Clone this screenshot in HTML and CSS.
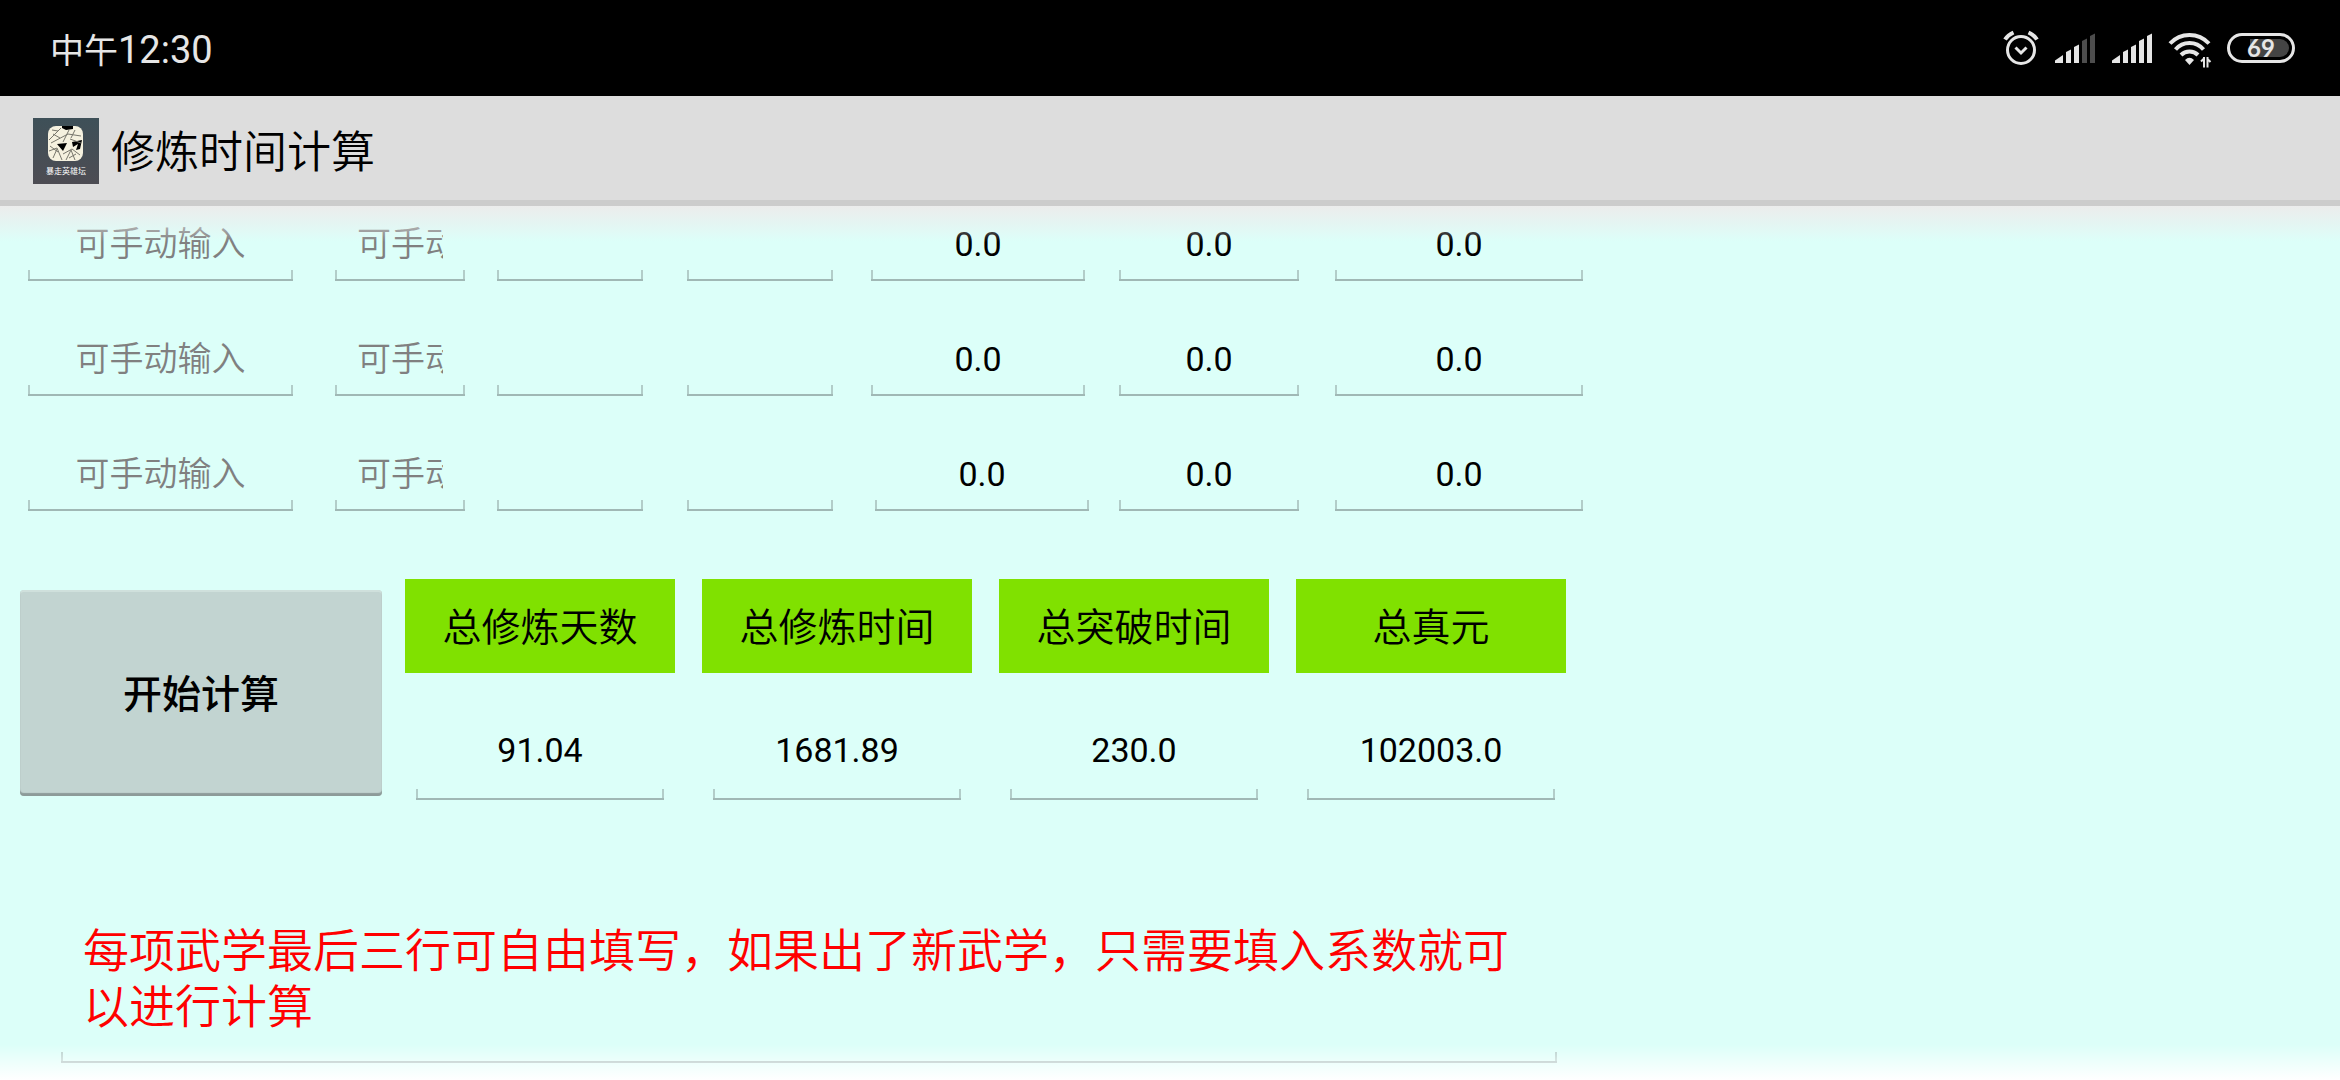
FILE: index.html
```html
<!DOCTYPE html>
<html lang="zh-CN">
<head>
<meta charset="utf-8">
<meta name="viewport" content="width=device-width, initial-scale=1">
<title>修炼时间计算</title>
<link rel="stylesheet" href="styles.css">
</head>
<body>
<div class="status-bar">
  <div class="clock">中午<span class="clock-digits">12:30</span></div>
  <div class="status-icons">
    <svg class="icon" width="36" height="36" viewBox="0 0 36 36" fill="none" stroke="#e6e6e6" stroke-width="3" aria-label="闹钟">
      <circle cx="18" cy="20" r="13.5"/>
      <path d="M12.5 17.5l5.5 5.500 5.500-5.500" stroke-width="3"/>
      <path d="M2 9.500Q5 5 10.500 2.500M34 9.500Q31 5 25.500 2.500" stroke-width="4"/>
    </svg>
    <svg class="icon" width="42" height="36" viewBox="0 0 42 36" fill="#e6e6e6" aria-label="信号一">
      <path d="M1 33v-2.500l8-5.500v8zM12 33V22l5-2.500V33zM20 33V17l5-2.500V33z"/>
      <path d="M28 33V11l5-2.500V33zM36 33V6l5-2.500V33z" fill="#4d4d4d"/>
    </svg>
    <svg class="icon" width="42" height="36" viewBox="0 0 42 36" fill="#e6e6e6" aria-label="信号二">
      <path d="M1 33v-2.500l8-5.500v8zM12 33V22l5-2.500V33zM20 33V17l5-2.500V33zM28 33V11l5-2.500V33zM36 33V6l5-2.500V33z"/>
    </svg>
    <svg class="icon" width="44" height="36" viewBox="0 0 44 36" fill="none" stroke="#e6e6e6" stroke-width="4" aria-label="无线网络">
      <path d="M2 13.500Q10 5 21.500 5t19.500 8.500"/>
      <path d="M7.500 19.500Q13 13 21.500 13t14 6.500"/>
      <path d="M13 25Q16.500 21.500 21.500 21.500t8.500 3.500"/>
      <path d="M17 30Q21.500 25.500 26 30L21.500 35z" fill="#e6e6e6" stroke="none"/>
      <path d="M36 27v10.500M33 31.500l3-3M39.500 37.500V27M42.500 32l-3-3" stroke-width="2"/>
    </svg>
    <div class="battery"><span class="battery-level">69</span></div>
  </div>
</div>

<header class="app-bar">
  <svg class="app-icon" width="66" height="66" viewBox="0 0 66 66" aria-hidden="true">
    <defs>
      <linearGradient id="sky" x1="0" y1="0" x2="0" y2="1">
        <stop offset="0" stop-color="#3e5058"/><stop offset="1" stop-color="#4d4c53"/>
      </linearGradient>
    </defs>
    <rect width="66" height="66" fill="url(#sky)"/>
    <rect x="15" y="8" width="35" height="35" rx="8" fill="#f5f1df"/>
    <path d="M29 8h11v3l-7 1-4-2z" fill="#000"/>
    <path d="M24 26l10-1-4 8zM39 24l10-2-2 9-4 1 2-6-5 3z" fill="#000"/>
    <path d="M16 22l12-12M18 25l17-9 13 2M20 16l7 4M36 12l-6 12M42 12l-4 8M16 33l8-3 5 12M20 40l4-9M30 36l9-5 8 6M33 42l5-10 4 10M37 21l11 4M19 12l6 1M43 36l-7 4M17 28l8 6" fill="none" stroke="#77766c" stroke-width="1"/>
    <text class="app-icon-name" x="33" y="56" text-anchor="middle">暴走英雄坛</text>
  </svg>
  <h1 class="app-title">修炼时间计算</h1>
</header>

<main class="content">
  <form class="sheet">
    <div class="skill-row">
      <input class="field name" aria-label="武学一" placeholder="可手动输入">
      <input class="field factor" aria-label="系数一" placeholder="可手动输入">
      <input class="field level" aria-label="当前等级一">
      <input class="field level" aria-label="目标等级一">
      <input class="field train" aria-label="修炼时间一" value="0.0">
      <input class="field break" aria-label="突破时间一" value="0.0">
      <input class="field energy" aria-label="真元一" value="0.0">
    </div>
    <div class="skill-row">
      <input class="field name" aria-label="武学二" placeholder="可手动输入">
      <input class="field factor" aria-label="系数二" placeholder="可手动输入">
      <input class="field level" aria-label="当前等级二">
      <input class="field level" aria-label="目标等级二">
      <input class="field train" aria-label="修炼时间二" value="0.0">
      <input class="field break" aria-label="突破时间二" value="0.0">
      <input class="field energy" aria-label="真元二" value="0.0">
    </div>
    <div class="skill-row skill-row-last">
      <input class="field name" aria-label="武学三" placeholder="可手动输入">
      <input class="field factor" aria-label="系数三" placeholder="可手动输入">
      <input class="field level" aria-label="当前等级三">
      <input class="field level" aria-label="目标等级三">
      <input class="field train" aria-label="修炼时间三" value="0.0">
      <input class="field break" aria-label="突破时间三" value="0.0">
      <input class="field energy" aria-label="真元三" value="0.0">
    </div>

    <div class="summary">
      <button class="calculate" type="button">开始计算</button>
      <div class="totals">
        <div class="total">
          <label class="total-label" for="days">总修炼天数</label>
          <input class="field total-field" id="days" value="91.04">
        </div>
        <div class="total">
          <label class="total-label" for="train">总修炼时间</label>
          <input class="field total-field" id="train" value="1681.89">
        </div>
        <div class="total">
          <label class="total-label" for="break">总突破时间</label>
          <input class="field total-field" id="break" value="230.0">
        </div>
        <div class="total">
          <label class="total-label" for="energy">总真元</label>
          <input class="field total-field" id="energy" value="102003.0">
        </div>
      </div>
    </div>

    <textarea class="field note" rows="2" aria-label="说明">每项武学最后三行可自由填写，如果出了新武学，只需要填入系数就可以进行计算</textarea>
  </form>
</main>
</body>
</html>
```

FILE: styles.css
```css
* {
  box-sizing: border-box;
}

body {
  display: flex;
  flex-direction: column;
  min-height: 100vh;
  margin: 0;
  background: #dcfff9;
  color: #000;
  font-family: Roboto, "Noto Sans CJK SC", sans-serif;
  font-size: 34px;
}

/* System status bar */
.status-bar {
  display: flex;
  align-items: center;
  justify-content: space-between;
  height: 96px;
  padding: 0 45px 0 50px;
  background: #000;
  color: #e6e6e6;
}

.clock {
  padding-top: 4px;
  font-size: 34px;
  line-height: 48px;
}

.clock-digits {
  font-size: 38px;
}

.status-icons {
  display: flex;
  align-items: center;
  gap: 15px;
}

.icon {
  display: block;
  overflow: visible;
}

.battery {
  width: 68px;
  height: 30px;
  padding: 3px;
  border: 3px solid #e6e6e6;
  border-radius: 15px;
}

.battery-level {
  display: block;
  border-radius: 9px;
  background: linear-gradient(90deg, #000 30%, #444 30%);
  font-family: Lato, sans-serif;
  font-size: 24px;
  font-weight: 700;
  line-height: 18px;
  text-align: center;
}

/* App bar */
.app-bar {
  display: flex;
  align-items: center;
  gap: 12px;
  height: 110px;
  padding: 6px 33px 0;
  border-bottom: 6px solid #ccc;
  background: #ddd;
}

.app-icon {
  flex: none;
}

.app-icon-name {
  fill: #fff;
  font-size: 8px;
}

.app-title {
  margin: 0;
  padding-top: 4px;
  font-size: 44px;
  font-weight: 350;
  line-height: 64px;
}

/* Scrolling content, faded at both edges */
.content {
  position: relative;
  flex: 1;
}

.content::before,
.content::after {
  position: absolute;
  right: 0;
  left: 0;
  height: 36px;
  content: "";
  pointer-events: none;
}

.content::before {
  top: 0;
  background: linear-gradient(#ececec, #ececec00);
}

.content::after {
  bottom: 0;
  background: linear-gradient(#fff0, #fff);
}

.sheet {
  width: 1600px;
  max-width: 100%;
  padding: 9px 18px 0 28px;
}

.skill-row {
  display: grid;
  grid-template-columns: 307px 162px 190px 184px 248px 216px 248px;
  margin-bottom: 49px;
}

.skill-row-last {
  grid-template-columns: 307px 162px 190px 188px 244px 216px 248px;
}

/* Underline with a short tick at each end */
.field {
  display: block;
  min-width: 0;
  height: 66px;
  margin: 0;
  padding: 0 22px 8px;
  border: 0;
  border-radius: 0;
  outline: 0;
  background:
    linear-gradient(#a0b8b5, #a0b8b5) bottom / 100% 2px no-repeat,
    linear-gradient(#b2cdc9, #b2cdc9) left bottom / 2px 11px no-repeat,
    linear-gradient(#b2cdc9, #b2cdc9) right bottom / 2px 11px no-repeat;
  color: #000;
  font-family: inherit;
  font-size: 34px;
  text-align: center;
}

.field::placeholder {
  color: #808080;
  font-weight: 350;
  opacity: 1;
}

.name {
  width: 265px;
}

.factor {
  width: 130px;
  text-align: left;
}

.level {
  width: 146px;
}

.train {
  width: 214px;
}

.break {
  width: 180px;
}

.energy {
  width: 248px;
}

.summary {
  display: flex;
  gap: 23px;
  margin: 68px 0 0 -8px;
}

.calculate {
  width: 362px;
  height: 206px;
  margin-top: 11px;
  padding: 0 0 4px;
  border: 0;
  border-radius: 4px;
  background: #c2d4d1;
  box-shadow: inset 0 -3px 1px #8d9b99, inset 0 2px #cfe0dc;
  color: #000;
  font-family: inherit;
  font-size: 39px;
  font-weight: 500;
}

.totals {
  display: grid;
  grid-template-columns: repeat(4, 270px);
  gap: 27px;
}

.total-label {
  display: block;
  padding-top: 4px;
  background: #80e100;
  font-size: 39px;
  font-weight: 350;
  line-height: 90px;
  text-align: center;
}

.total-field {
  width: 248px;
  height: 75px;
  margin: 52px auto 0;
  padding-bottom: 26px;
}

.note {
  width: 1496px;
  height: 150px;
  margin: 113px 0 0 33px;
  padding: 10px 22px 0;
  color: #f00;
  font-size: 46px;
  font-weight: 350;
  line-height: 56px;
  text-align: left;
  resize: none;
  overflow: hidden;
}
```
